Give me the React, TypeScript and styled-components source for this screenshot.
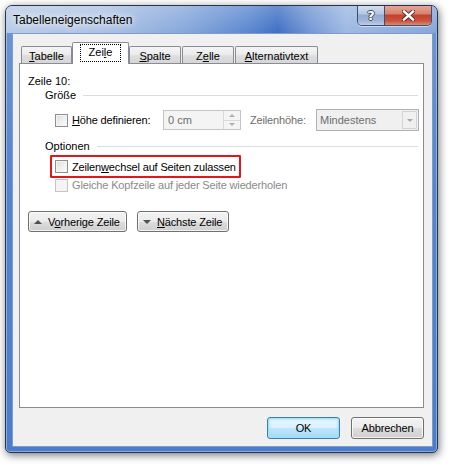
import React from 'react';
import styled, { createGlobalStyle, css } from 'styled-components';

const Global = createGlobalStyle`
  html, body { margin: 0; padding: 0; background: #ffffff; }
  body {
    font-family: "Liberation Sans", Arial, sans-serif;
    font-size: 11px;
    color: #000;
    -webkit-font-smoothing: antialiased;
  }
  #root { width: 449px; height: 464px; }
`;

const Stage = styled.div`
  width: 449px;
  height: 464px;
  box-sizing: border-box;
  padding: 5px 0 0 5px;
  overflow: hidden;
`;

const Window = styled.div`
  width: 433px;
  height: 448px;
  box-sizing: border-box;
  border: 1px solid #27364c;
  border-radius: 7px 7px 5px 5px;
  background: linear-gradient(180deg, #6f97d4 0%, #5585cf 40%, #4b7dcc 100%);
  box-shadow: 1px 2px 8px rgba(0, 0, 0, 0.55), inset 0 0 0 1px rgba(255, 255, 255, 0.35);
  display: flex;
  flex-direction: column;
  overflow: hidden;
`;

const TitleBar = styled.div`
  height: 27px;
  flex: none;
  display: flex;
  justify-content: space-between;
  align-items: flex-start;
  background:
    linear-gradient(180deg, rgba(255, 255, 255, 0.22) 0%, rgba(255, 255, 255, 0) 100%),
    linear-gradient(90deg, #b8cbe6 0%, #adc3e4 22%, #85a7da 42%, #5b88d0 56%, #3f70c4 63%, #7699d6 71%, #9db8e2 79%, #84a6da 100%);
`;

const TitleText = styled.div`
  padding: 7px 0 0 7px;
  font-size: 12px;
  line-height: 14px;
  color: #000;
  text-shadow: 0 0 6px #fff, 0 0 10px rgba(255, 255, 255, 0.9);
`;

const CaptionGroup = styled.div`
  display: flex;
  margin: -1px 5px 0 0;
  border: 1px solid #3b4f6e;
  border-top: none;
  border-radius: 0 0 5px 5px;
  overflow: hidden;
  box-shadow: 0 1px 0 rgba(255, 255, 255, 0.5);
`;

const CaptionButton = styled.div<{ $close?: boolean }>`
  height: 20px;
  width: ${(p) => (p.$close ? 46 : 27)}px;
  display: flex;
  align-items: center;
  justify-content: center;
  box-sizing: border-box;
  ${(p) =>
    p.$close
      ? css`
          background: linear-gradient(180deg, #e7a99c 0%, #d9816e 45%, #c3412b 50%, #c9543e 80%, #dc8a6f 100%);
        `
      : css`
          background: linear-gradient(180deg, #d5e1f1 0%, #b3c7e4 45%, #94acd2 50%, #9fb6da 80%, #bccfe9 100%);
          border-right: 1px solid #3b4f6e;
        `}
`;

const HelpGlyph = styled.span`
  font-family: "DejaVu Sans", sans-serif;
  font-weight: bold;
  font-size: 13px;
  line-height: 13px;
  color: #fff;
  text-shadow: -1px 0 #3c4a60, 1px 0 #3c4a60, 0 -1px #3c4a60, 0 1px #3c4a60;
`;

const Client = styled.div`
  flex: 1;
  margin: 0 4px 5px 6px;
  border: 1px solid #7f9bc6;
  background: #f0f0f0;
  display: flex;
  flex-direction: column;
  padding: 8px 8px 7px 6px;
`;

const TabStrip = styled.div`
  height: 21px;
  flex: none;
  display: flex;
  align-items: flex-end;
  padding-left: 2px;
  position: relative;
  z-index: 1;
`;

const Tab = styled.div<{ $w: number; $ml?: number; $active?: boolean }>`
  box-sizing: border-box;
  width: ${(p) => p.$w}px;
  margin-left: ${(p) => p.$ml ?? 0}px;
  border: 1px solid #898c95;
  border-bottom: none;
  border-radius: 2px 2px 0 0;
  display: flex;
  align-items: center;
  justify-content: center;
  ${(p) =>
    p.$active
      ? css`
          height: 22px;
          margin-bottom: -1px;
          background: #fff;
          padding-bottom: 2px;
        `
      : css`
          height: 17px;
          background: linear-gradient(180deg, #f4f4f4 0%, #ececec 45%, #dedede 55%, #d6d6d6 100%);
          padding-top: 1px;
        `}
`;

const FocusRect = styled.span`
  border: 1px dotted #000;
  padding: 1px 8px 2px 8px;
  line-height: 13px;
`;

const Panel = styled.div`
  height: 345px;
  flex: none;
  box-sizing: border-box;
  border: 1px solid #898c95;
  background: #fff;
  padding: 10px 5px 0 8px;
  display: flex;
  flex-direction: column;
`;

const Line = styled.div`
  height: 14px;
  line-height: 14px;
  white-space: nowrap;
`;

const GroupHeader = styled.div<{ $mt?: number }>`
  height: 14px;
  line-height: 14px;
  margin-top: ${(p) => p.$mt ?? 0}px;
  margin-left: 17px;
  display: flex;
  align-items: center;
  &::after {
    content: "";
    flex: 1;
    height: 1px;
    margin-left: 7px;
    margin-top: 1px;
    background: #d8dde4;
  }
`;

const FieldRow = styled.div`
  height: 22px;
  margin-top: 7px;
  padding-left: 27px;
  display: flex;
  align-items: center;
`;

const CheckLabel = styled.label<{ $w?: number; $disabled?: boolean }>`
  display: flex;
  align-items: center;
  gap: 4px;
  white-space: nowrap;
  line-height: 14px;
  letter-spacing: -0.15px;
  color: ${(p) => (p.$disabled ? '#8a8a8a' : '#000')};
  ${(p) => p.$w && css`width: ${p.$w}px;`}
  flex: none;
`;

const Box = styled.span<{ $disabled?: boolean }>`
  width: 13px;
  height: 13px;
  box-sizing: border-box;
  flex: none;
  ${(p) =>
    p.$disabled
      ? css`
          border: 1px solid #c4c4c4;
          background: #f4f4f4;
        `
      : css`
          border: 1px solid #8e8f8f;
          background: linear-gradient(135deg, #dcdcdc 0%, #eeeeee 50%, #fcfcfc 100%);
          box-shadow: inset 0 0 0 1px #f4f4f4;
        `}
`;

const Spin = styled.div`
  width: 78px;
  height: 20px;
  box-sizing: border-box;
  border: 1px solid #c2c6cb;
  background: #f4f4f4;
  display: flex;
  align-items: stretch;
  flex: none;
`;

const SpinText = styled.div`
  flex: 1;
  padding-left: 4px;
  line-height: 18px;
  color: #6d6d6d;
`;

const SpinButtons = styled.div`
  width: 16px;
  display: flex;
  flex-direction: column;
  border-left: 1px solid #dadada;
`;

const SpinHalf = styled.div<{ $down?: boolean }>`
  flex: 1;
  display: flex;
  align-items: center;
  justify-content: center;
  background: #f4f4f4;
  ${(p) => p.$down && css`border-top: 1px solid #dadada;`}
`;

const Arrow = styled.span<{ $dir: 'up' | 'down'; $size?: number; $color?: string }>`
  width: 0;
  height: 0;
  flex: none;
  border-left: ${(p) => p.$size ?? 3}px solid transparent;
  border-right: ${(p) => p.$size ?? 3}px solid transparent;
  ${(p) =>
    p.$dir === 'up'
      ? css`border-bottom: ${p.$size ?? 3}px solid ${p.$color ?? '#a0a0a0'};`
      : css`border-top: ${p.$size ?? 3}px solid ${p.$color ?? '#a0a0a0'};`}
`;

const GrayLabel = styled.span`
  margin-left: 9px;
  width: 66px;
  flex: none;
  color: #6d6d6d;
  letter-spacing: -0.15px;
  white-space: nowrap;
`;

const Combo = styled.div`
  width: 103px;
  height: 22px;
  box-sizing: border-box;
  border: 1px solid #adb2b5;
  background: #f0f0f0;
  display: flex;
  align-items: stretch;
  flex: none;
`;

const ComboText = styled.div`
  flex: 1;
  padding-left: 3px;
  line-height: 20px;
  color: #6d6d6d;
`;

const ComboDrop = styled.div`
  width: 15px;
  margin: 1px;
  box-sizing: border-box;
  border: 1px solid #d4d4d4;
  display: flex;
  align-items: center;
  justify-content: center;
`;

const Highlight = styled.div`
  margin: 2px 0 0 22px;
  width: 191px;
  height: 23px;
  box-sizing: border-box;
  border: 2px solid #e3171b;
  border-radius: 1px;
  padding-left: 3px;
  display: flex;
  align-items: center;
`;

const PlainRow = styled.div`
  height: 14px;
  padding-left: 27px;
  display: flex;
  align-items: center;
`;

const NavRow = styled.div`
  margin-top: 19px;
  display: flex;
  gap: 10px;
`;

const buttonBase = css`
  box-sizing: border-box;
  border: 1px solid #707070;
  border-radius: 3px;
  background: linear-gradient(180deg, #f2f2f2 0%, #ebebeb 50%, #dddddd 51%, #cfcfcf 100%);
  box-shadow: inset 0 0 0 1px rgba(255, 255, 255, 0.75);
  font-family: inherit;
  font-size: 11px;
  color: #000;
  display: flex;
  align-items: center;
  white-space: nowrap;
  letter-spacing: -0.15px;
`;

const NavButton = styled.div<{ $w: number }>`
  ${buttonBase}
  width: ${(p) => p.$w}px;
  height: 21px;
  padding-left: 5px;
  gap: 6px;
`;

const Footer = styled.div`
  margin-top: 9px;
  display: flex;
  justify-content: flex-end;
  gap: 11px;
`;

const DialogButton = styled.div<{ $default?: boolean }>`
  ${buttonBase}
  width: 73px;
  height: 22px;
  justify-content: center;
  ${(p) =>
    p.$default &&
    css`
      border-color: #3c7fb1;
      background: linear-gradient(180deg, #eaf6fd 0%, #d9f0fc 50%, #bee6fd 51%, #a7d9f5 100%);
      box-shadow: inset 0 0 0 1px #9fe1f8, inset 0 0 2px 2px rgba(160, 225, 250, 0.6);
    `}
`;

const U = styled.u`
  text-decoration: underline;
  text-underline-offset: 1px;
`;

const tabs: { label: React.ReactNode; w: number; ml?: number; active?: boolean }[] = [
  { label: <><U>T</U>abelle</>, w: 51 },
  { label: <>Zei<U>l</U>e</>, w: 57, active: true },
  { label: <><U>S</U>palte</>, w: 52 },
  { label: <>Z<U>e</U>lle</>, w: 52, ml: 1 },
  { label: <><U>A</U>lternativtext</>, w: 83, ml: 1 },
];

export default function App() {
  return (
    <>
      <Global />
      <Stage>
        <Window>
          <TitleBar>
            <TitleText>Tabelleneigenschaften</TitleText>
            <CaptionGroup>
              <CaptionButton>
                <HelpGlyph>?</HelpGlyph>
              </CaptionButton>
              <CaptionButton $close>
                <svg width="13" height="11" viewBox="0 0 13 11">
                  <path d="M2 1.5 L11 9.5 M11 1.5 L2 9.5" stroke="#4a2a26" strokeWidth="4.2" strokeLinecap="square" />
                  <path d="M2 1.5 L11 9.5 M11 1.5 L2 9.5" stroke="#ffffff" strokeWidth="2.4" strokeLinecap="square" />
                </svg>
              </CaptionButton>
            </CaptionGroup>
          </TitleBar>
          <Client>
            <TabStrip>
              {tabs.map((t, i) => (
                <Tab key={i} $w={t.w} $ml={t.ml} $active={t.active}>
                  {t.active ? <FocusRect>{t.label}</FocusRect> : <span>{t.label}</span>}
                </Tab>
              ))}
            </TabStrip>
            <Panel>
              <Line>Zeile 10:</Line>
              <GroupHeader>Größe</GroupHeader>
              <FieldRow>
                <CheckLabel $w={108}>
                  <Box />
                  <span><U>H</U>öhe definieren:</span>
                </CheckLabel>
                <Spin>
                  <SpinText>0 cm</SpinText>
                  <SpinButtons>
                    <SpinHalf>
                      <Arrow $dir="up" $size={3} $color="#b0b0b0" />
                    </SpinHalf>
                    <SpinHalf $down>
                      <Arrow $dir="down" $size={3} $color="#b0b0b0" />
                    </SpinHalf>
                  </SpinButtons>
                </Spin>
                <GrayLabel>Zeilenhöhe:</GrayLabel>
                <Combo>
                  <ComboText>Mindestens</ComboText>
                  <ComboDrop>
                    <Arrow $dir="down" $size={3} $color="#a8a8a8" />
                  </ComboDrop>
                </Combo>
              </FieldRow>
              <GroupHeader $mt={8}>Optionen</GroupHeader>
              <Highlight>
                <CheckLabel>
                  <Box />
                  <span>Zeilen<U>w</U>echsel auf Seiten zulassen</span>
                </CheckLabel>
              </Highlight>
              <PlainRow>
                <CheckLabel $disabled>
                  <Box $disabled />
                  <span>Gleiche Kopfzeile auf jeder Seite wiederholen</span>
                </CheckLabel>
              </PlainRow>
              <NavRow>
                <NavButton $w={99}>
                  <Arrow $dir="up" $size={4} $color="#505050" />
                  <span>V<U>o</U>rherige Zeile</span>
                </NavButton>
                <NavButton $w={92}>
                  <Arrow $dir="down" $size={4} $color="#505050" />
                  <span><U>N</U>ächste Zeile</span>
                </NavButton>
              </NavRow>
            </Panel>
            <Footer>
              <DialogButton $default>OK</DialogButton>
              <DialogButton>Abbrechen</DialogButton>
            </Footer>
          </Client>
        </Window>
      </Stage>
    </>
  );
}
